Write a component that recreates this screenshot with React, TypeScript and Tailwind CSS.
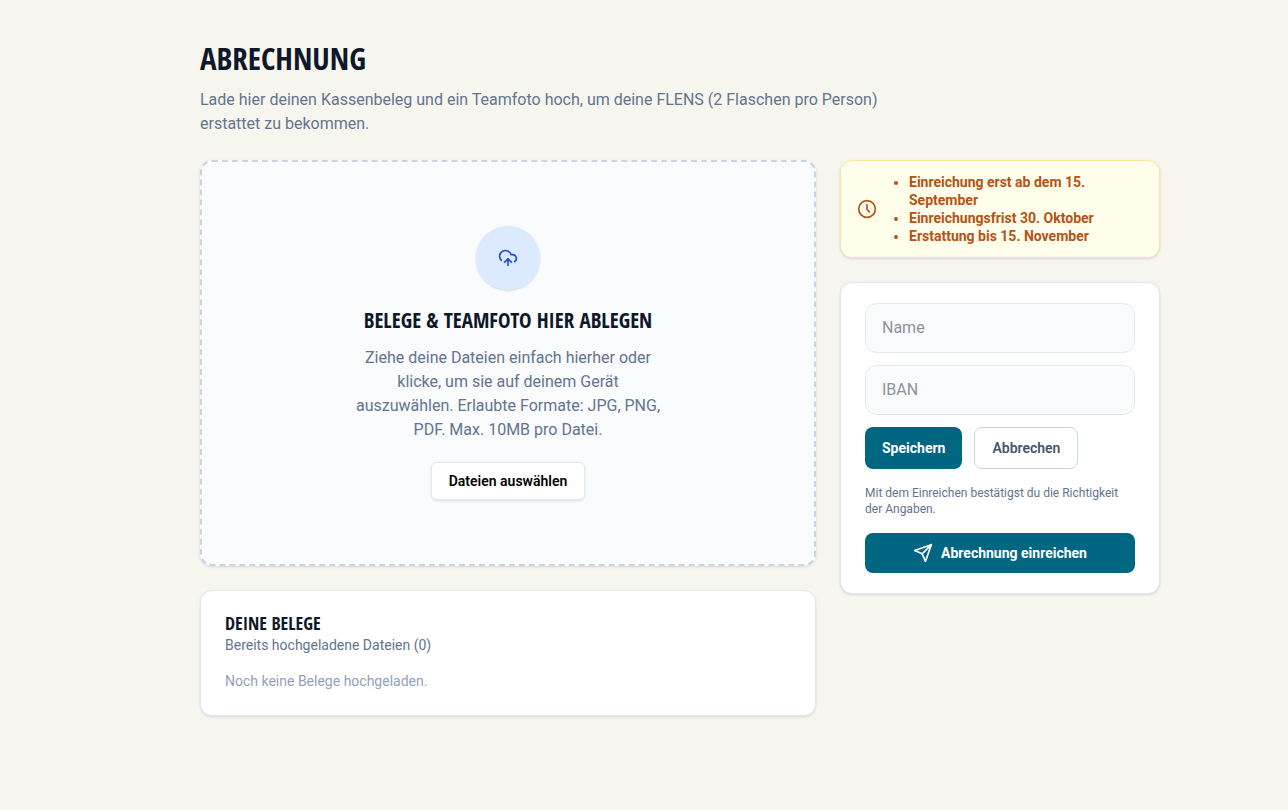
import React, { useState } from "react";
import { CloudUpload } from "lucide-react";

const heading = "font-['Open_Sans_Condensed','Liberation_Sans_Narrow',sans-serif] font-bold uppercase text-[#0f172a]";

const deadlines = [
  "Einreichung erst ab dem 15. September",
  "Einreichungsfrist 30. Oktober",
  "Erstattung bis 15. November",
];

const ClockIcon = () => (
  <svg
    viewBox="0 0 24 24"
    fill="none"
    stroke="currentColor"
    strokeWidth="2"
    strokeLinecap="round"
    strokeLinejoin="round"
    className="size-5 shrink-0"
  >
    <circle cx="12" cy="12" r="10" />
    <path d="M12 7v5.3l2.8 3.2" />
  </svg>
);

const SendIcon = () => (
  <svg
    viewBox="0 0 24 24"
    fill="none"
    stroke="currentColor"
    strokeWidth="2"
    strokeLinecap="round"
    strokeLinejoin="round"
    className="size-5 shrink-0"
  >
    <path d="M22 2 15 22l-4-9-9-4Z" />
    <path d="M22 2 11 13" />
  </svg>
);

const UploadZone = () => (
  <section className="flex flex-col items-center rounded-xl border-2 border-dashed border-slate-300 bg-[#f9fbfd] px-6 py-16 text-center shadow-sm">
    <div className="mb-4 flex size-16 items-center justify-center rounded-full bg-blue-100 text-[#1d4ed8] shadow-sm">
      <CloudUpload size={20} />
    </div>
    <h2 className={`${heading} mb-3 text-[21px] leading-7`}>Belege &amp; Teamfoto hier ablegen</h2>
    <p className="mb-5 max-w-xs text-slate-500">
      Ziehe deine Dateien einfach hierher oder klicke, um sie auf deinem Gerät auszuwählen. Erlaubte
      Formate: JPG, PNG, PDF. Max. 10MB pro Datei.
    </p>
    <button
      type="button"
      className="rounded-md border border-slate-200 bg-white px-[17px] py-2 text-sm font-semibold text-black shadow-sm"
    >
      Dateien auswählen
    </button>
  </section>
);

const ReceiptList = () => (
  <section className="rounded-xl border border-slate-200 bg-white p-6 shadow-sm">
    <h2 className={`${heading} mb-1 text-lg leading-4`}>Deine Belege</h2>
    <p className="mb-4 text-sm text-slate-500">Bereits hochgeladene Dateien (0)</p>
    <p className="text-sm text-slate-400">Noch keine Belege hochgeladen.</p>
  </section>
);

const Notice = () => (
  <div className="flex items-center gap-3 rounded-xl border border-[#f8ea9c] bg-[#fffeea] px-4 py-3 text-[#b45316] shadow-sm">
    <ClockIcon />
    <ul className="list-disc pl-5 text-sm leading-[18px] font-bold">
      {deadlines.map((d) => (
        <li key={d}>{d}</li>
      ))}
    </ul>
  </div>
);

const PayoutForm = () => {
  const [name, setName] = useState("");
  const [iban, setIban] = useState("");

  const reset = () => {
    setName("");
    setIban("");
  };

  const input =
    "w-full rounded-xl border border-slate-200 bg-[#f9fbfd] px-4 py-3 text-slate-900 placeholder:text-[#8b939e]";

  return (
    <form
      onSubmit={(e) => e.preventDefault()}
      className="rounded-xl border border-slate-200 bg-white px-6 py-5 shadow-sm"
    >
      <div className="flex flex-col gap-3">
        <input aria-label="Name" placeholder="Name" value={name} onChange={(e) => setName(e.target.value)} className={input} />
        <input aria-label="IBAN" placeholder="IBAN" value={iban} onChange={(e) => setIban(e.target.value)} className={input} />
        <div className="flex gap-3">
          <button type="button" className="h-[42px] rounded-lg bg-[#006681] px-[17px] text-sm font-bold text-white">
            Speichern
          </button>
          <button
            type="button"
            onClick={reset}
            className="h-[42px] rounded-lg border border-slate-300 bg-white px-[17px] text-sm font-semibold text-slate-600"
          >
            Abbrechen
          </button>
        </div>
      </div>
      <p className="my-4 text-xs text-slate-500">Mit dem Einreichen bestätigst du die Richtigkeit der Angaben.</p>
      <button
        type="submit"
        className="flex h-10 w-full items-center justify-center gap-2 rounded-lg bg-[#006681] text-sm font-bold text-white"
      >
        <SendIcon />
        Abrechnung einreichen
      </button>
    </form>
  );
};

const App = () => (
  <div className="min-h-screen bg-[#f7f6ee] pl-[72px] font-[Roboto,sans-serif]">
    <main className="mx-auto max-w-5xl px-8 py-10">
      <h1 className={`${heading} mb-3 text-[31px] leading-9`}>Abrechnung</h1>
      <p className="mb-6 max-w-[700px] text-slate-500">
        Lade hier deinen Kassenbeleg und ein Teamfoto hoch, um deine FLENS (2 Flaschen pro Person) erstattet zu
        bekommen.
      </p>
      <div className="grid items-start gap-6 md:grid-cols-[1fr_320px]">
        <div className="flex flex-col gap-6">
          <UploadZone />
          <ReceiptList />
        </div>
        <aside className="flex flex-col gap-6">
          <Notice />
          <PayoutForm />
        </aside>
      </div>
    </main>
  </div>
);

export default App;
